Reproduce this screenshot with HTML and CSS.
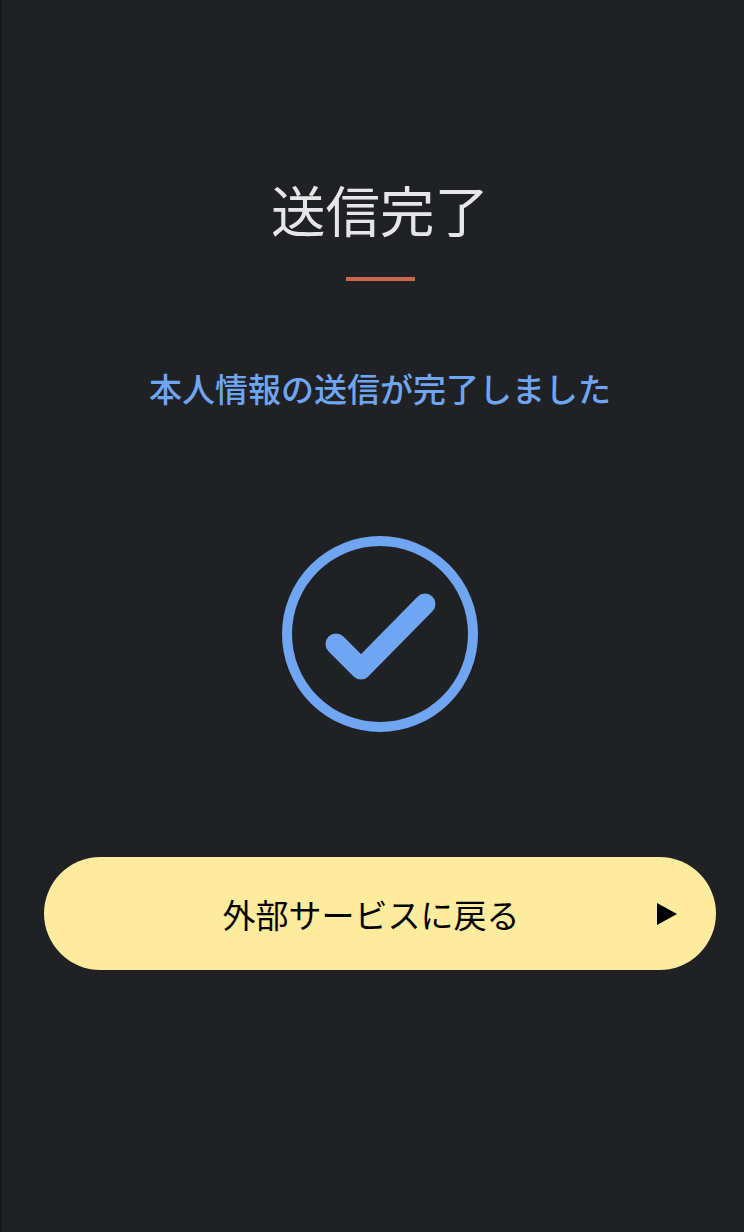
FILE: index.html
```html
<!DOCTYPE html>
<html lang="ja">
<head>
    <meta charset="utf-8">
    <title>送信完了</title>
    <link rel="stylesheet" href="styles.css">
</head>
<body>
    <div class="page">
        <h1 class="title">送信完了</h1>
        <div class="title-rule"></div>
        <p class="message">本人情報の送信が完了しました</p>
        <svg class="check-icon" viewBox="0 0 196 196">
            <circle cx="98" cy="98" r="93" fill="none" stroke="#6fa5f1" stroke-width="10"/>
            <polyline points="54,108 79,133 143,68" fill="none" stroke="#6fa5f1" stroke-width="21" stroke-linecap="round" stroke-linejoin="round"/>
        </svg>
        <button class="back-button">
            <span class="back-label">外部サービスに戻る</span>
            <svg class="back-arrow" viewBox="0 0 20 22">
                <polygon points="0,0 20,11 0,22" fill="#000"/>
            </svg>
        </button>
    </div>
</body>
</html>
```

FILE: styles.css
```css
html, body {
    margin: 0;
    padding: 0;
}
body {
    width: 744px;
    height: 1232px;
    overflow: hidden;
    background-color: #202125;
    font-family: "Noto Sans CJK JP", "Liberation Sans", sans-serif;
}
.page {
    box-sizing: border-box;
    height: 100%;
    padding: 170px 28px 0 42px;
    border-left: 2px solid #17181b;
    display: flex;
    flex-direction: column;
    align-items: center;
}
.title {
    margin: 0;
    font-size: 54.5px;
    line-height: 78px;
    font-weight: 400;
    color: #e6e6e6;
}
.title-rule {
    width: 69px;
    height: 4px;
    margin-top: 29px;
    background-color: #c8684a;
}
.message {
    margin: 83px 0 0;
    font-size: 33px;
    line-height: 48px;
    font-weight: 500;
    color: #6fa5f1;
}
.check-icon {
    width: 196px;
    height: 196px;
    margin-top: 124px;
}
.back-button {
    position: relative;
    width: 672px;
    height: 113px;
    margin-top: 125px;
    padding: 0 18px 0 0;
    border: none;
    border-radius: 57px;
    background-color: #fdec9e;
    color: #000;
    font-family: inherit;
    display: flex;
    align-items: center;
    justify-content: center;
}
.back-label {
    font-size: 33px;
    line-height: 48px;
    font-weight: 400;
}
.back-arrow {
    position: absolute;
    right: 39px;
    top: 46px;
    width: 20px;
    height: 22px;
}
```
